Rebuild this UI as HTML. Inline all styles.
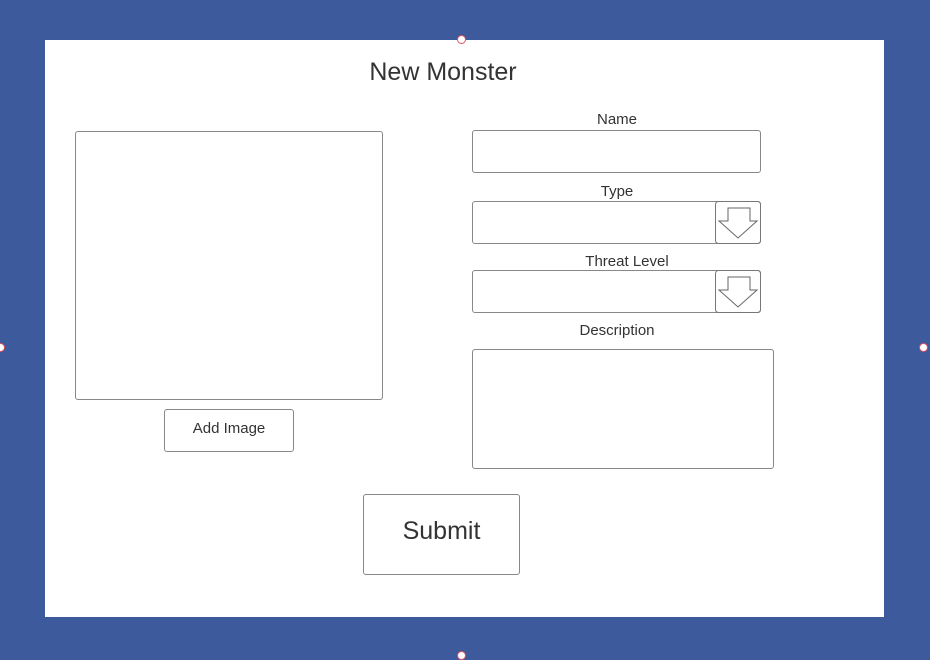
<!DOCTYPE html>
<html><head><style>
body{margin:0;width:930px;height:657px;background:#3d5a9c;position:relative;overflow:hidden;font-family:"Liberation Sans",sans-serif;color:#333}
.w{position:absolute;left:45px;top:40px;width:839px;height:577px;background:#fff}
.b{position:absolute;border:1px solid #888;border-radius:3px;background:#fff;box-sizing:border-box}
.t{position:absolute;font-size:15px;text-align:center}
.h{position:absolute;width:7px;height:7px;border:1px solid #e05060;border-radius:50%;background:#fff}
</style></head><body>
<div class="w"></div>
<div class="t" style="left:343px;top:58px;width:200px;font-size:25px">New Monster</div>
<div class="b" style="left:75px;top:131px;width:308px;height:269px"></div>
<div class="b" style="left:164px;top:409px;width:130px;height:43px;font-size:15px;text-align:center;line-height:38px">Add Image</div>
<div class="t" style="left:517px;top:111px;width:200px">Name</div>
<div class="b" style="left:472px;top:130px;width:289px;height:43px"></div>
<div class="t" style="left:517px;top:183px;width:200px">Type</div>
<div class="b" style="left:472px;top:201px;width:289px;height:43px"></div>
<div class="t" style="left:527px;top:253px;width:200px">Threat Level</div>
<div class="b" style="left:472px;top:270px;width:289px;height:43px"></div>
<svg style="position:absolute;left:715px;top:201px" width="46" height="43"><rect x="0.5" y="0.5" width="45" height="42" rx="3" fill="#fff" stroke="#777"/><path d="M13 7H35V20H42L23 37L4 20H13Z" fill="#fff" stroke="#666"/></svg>
<svg style="position:absolute;left:715px;top:270px" width="46" height="43"><rect x="0.5" y="0.5" width="45" height="42" rx="3" fill="#fff" stroke="#777"/><path d="M13 7H35V20H42L23 37L4 20H13Z" fill="#fff" stroke="#666"/></svg>
<div class="t" style="left:517px;top:322px;width:200px">Description</div>
<div class="b" style="left:472px;top:349px;width:302px;height:120px"></div>
<div class="b" style="left:363px;top:494px;width:157px;height:81px;font-size:25px;text-align:center;line-height:72px">Submit</div>
<div class="h" style="left:457px;top:35px"></div>
<div class="h" style="left:-4px;top:343px"></div>
<div class="h" style="left:919px;top:343px"></div>
<div class="h" style="left:457px;top:651px"></div>
</body></html>
